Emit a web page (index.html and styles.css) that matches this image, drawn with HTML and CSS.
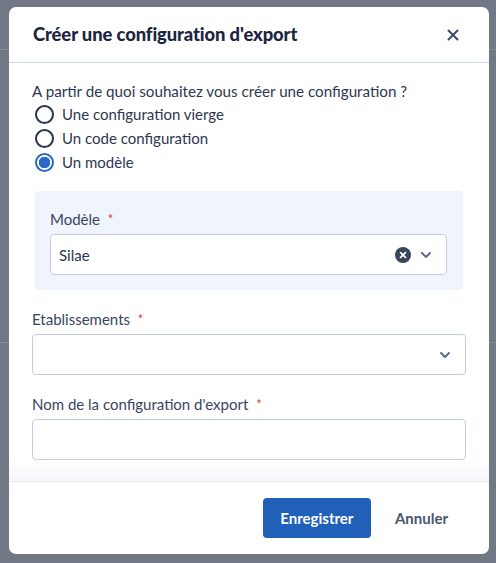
FILE: index.html
```html
<!DOCTYPE html>
<html lang="fr">
<head>
    <meta charset="utf-8" />
    <title>Créer une configuration d'export</title>
    <link rel="stylesheet" href="styles.css">
</head>
<body>
<div class="backdrop">
    <div class="modal">
        <div class="modal_head">
            <h2 class="modal_tit">Créer une configuration d'export</h2>
            <span class="close">
                <svg width="12" height="12" viewBox="0 0 12 12"><path d="M1.5 1.5l9 9M10.5 1.5l-9 9" stroke="#3d4a66" stroke-width="2" stroke-linecap="round"/></svg>
            </span>
        </div>
        <div class="modal_body">
            <p class="question">A partir de quoi souhaitez vous créer une configuration ?</p>
            <ul class="radios">
                <li><span class="radio"></span>Une configuration vierge</li>
                <li><span class="radio"></span>Un code configuration</li>
                <li><span class="radio on"></span>Un modèle</li>
            </ul>
            <div class="panel">
                <label class="lbl">Modèle <em>*</em></label>
                <div class="field">
                    <span class="val">Silae</span>
                    <span class="clear">
                        <svg width="16" height="16" viewBox="0 0 16 16"><circle cx="8" cy="8" r="8" fill="#3a4560"/><path d="M5.6 5.6l4.8 4.8M10.4 5.6l-4.8 4.8" stroke="#fff" stroke-width="1.8" stroke-linecap="round"/></svg>
                    </span>
                    <span class="chev">
                        <svg width="12" height="8" viewBox="0 0 12 8"><path d="M2 2l4 4 4-4" fill="none" stroke="#5f6c8c" stroke-width="2" stroke-linecap="round" stroke-linejoin="round"/></svg>
                    </span>
                </div>
            </div>
            <div class="group">
                <label class="lbl">Etablissements <em>*</em></label>
                <div class="field">
                    <span class="val"></span>
                    <span class="chev">
                        <svg width="12" height="8" viewBox="0 0 12 8"><path d="M2 2l4 4 4-4" fill="none" stroke="#5f6c8c" stroke-width="2" stroke-linecap="round" stroke-linejoin="round"/></svg>
                    </span>
                </div>
            </div>
            <div class="group">
                <label class="lbl">Nom de la configuration d'export <em>*</em></label>
                <div class="field"></div>
            </div>
            <div class="fade"></div>
        </div>
        <div class="modal_foot">
            <button class="btn btn_primary">Enregistrer</button>
            <button class="btn btn_link">Annuler</button>
        </div>
    </div>
</div>
</body>
</html>
```
FILE: styles.css
```css
body {margin:0;font:normal 15px/1.6 Lato, "Open Sans", "Noto Sans", sans-serif;color:#2d3750;}
.backdrop {height:563px;padding:7px 7px 0 9px;box-sizing:border-box;background:#727786 linear-gradient(to bottom, transparent 49px, #888c99 49px, #888c99 50px, transparent 50px, transparent 342px, #888c99 342px, #888c99 343px, transparent 343px);}
.modal {width:480px;height:547px;background:#fff;border-radius:7px;display:flex;flex-direction:column;overflow:hidden;}
.modal_head {display:flex;align-items:center;justify-content:space-between;height:56px;padding:0 30px 0 24px;border-bottom:1px solid #cfd8e8;box-sizing:border-box;}
.modal_tit {margin:0;font-size:18.4px;font-weight:900;color:#1b2540;letter-spacing:-0.1px;}
.close {display:flex;}
.modal_body {flex:1;padding:17px 23px 0 23px;position:relative;}
.question {margin:0;line-height:22px;font-size:15.2px;}
.radios {list-style:none;margin:0;padding:0;}
.radios li {display:flex;align-items:center;height:24px;}
.radio {width:15px;height:15px;border:2px solid #283350;border-radius:50%;margin:0 8px 0 3px;box-sizing:content-box;}
.radio.on {border-color:#2b67c4;background:radial-gradient(circle, #2b67c4 0, #2b67c4 5.5px, #fff 6px);}
.panel {margin:17px 3px 0 3px;padding:17px 16px 15px 15px;background:#f0f4fc;border-radius:4px;}
.lbl {display:block;color:#3a4560;line-height:22px;margin-bottom:4px;}
.lbl em {font-style:normal;color:#d9403a;margin-left:4px;font-size:13px;vertical-align:top;}
.field {display:flex;align-items:center;height:41px;border:1px solid #c2cde4;border-radius:4px;background:#fff;padding:0 14px 0 8px;box-sizing:border-box;}
.val {flex:1;}
.clear {display:flex;margin-right:9px;}
.chev {display:flex;}
.group {margin-top:18px;}
.fade {position:absolute;left:0;right:0;bottom:0;height:22px;background:linear-gradient(to bottom, rgba(245,246,249,0), #f6f7f9);}
.modal_foot {display:flex;justify-content:flex-end;align-items:center;height:72px;border-top:1px solid #e6e9ef;padding:0 41px 0 0;}
.btn {font:bold 15px Lato, "Open Sans", sans-serif;border:0;border-radius:4px;height:40px;cursor:pointer;}
.btn_primary {width:108px;background:#2160b8;color:#fff;}
.btn_link {background:none;color:#4a5570;margin-left:24px;padding:0;}
```
